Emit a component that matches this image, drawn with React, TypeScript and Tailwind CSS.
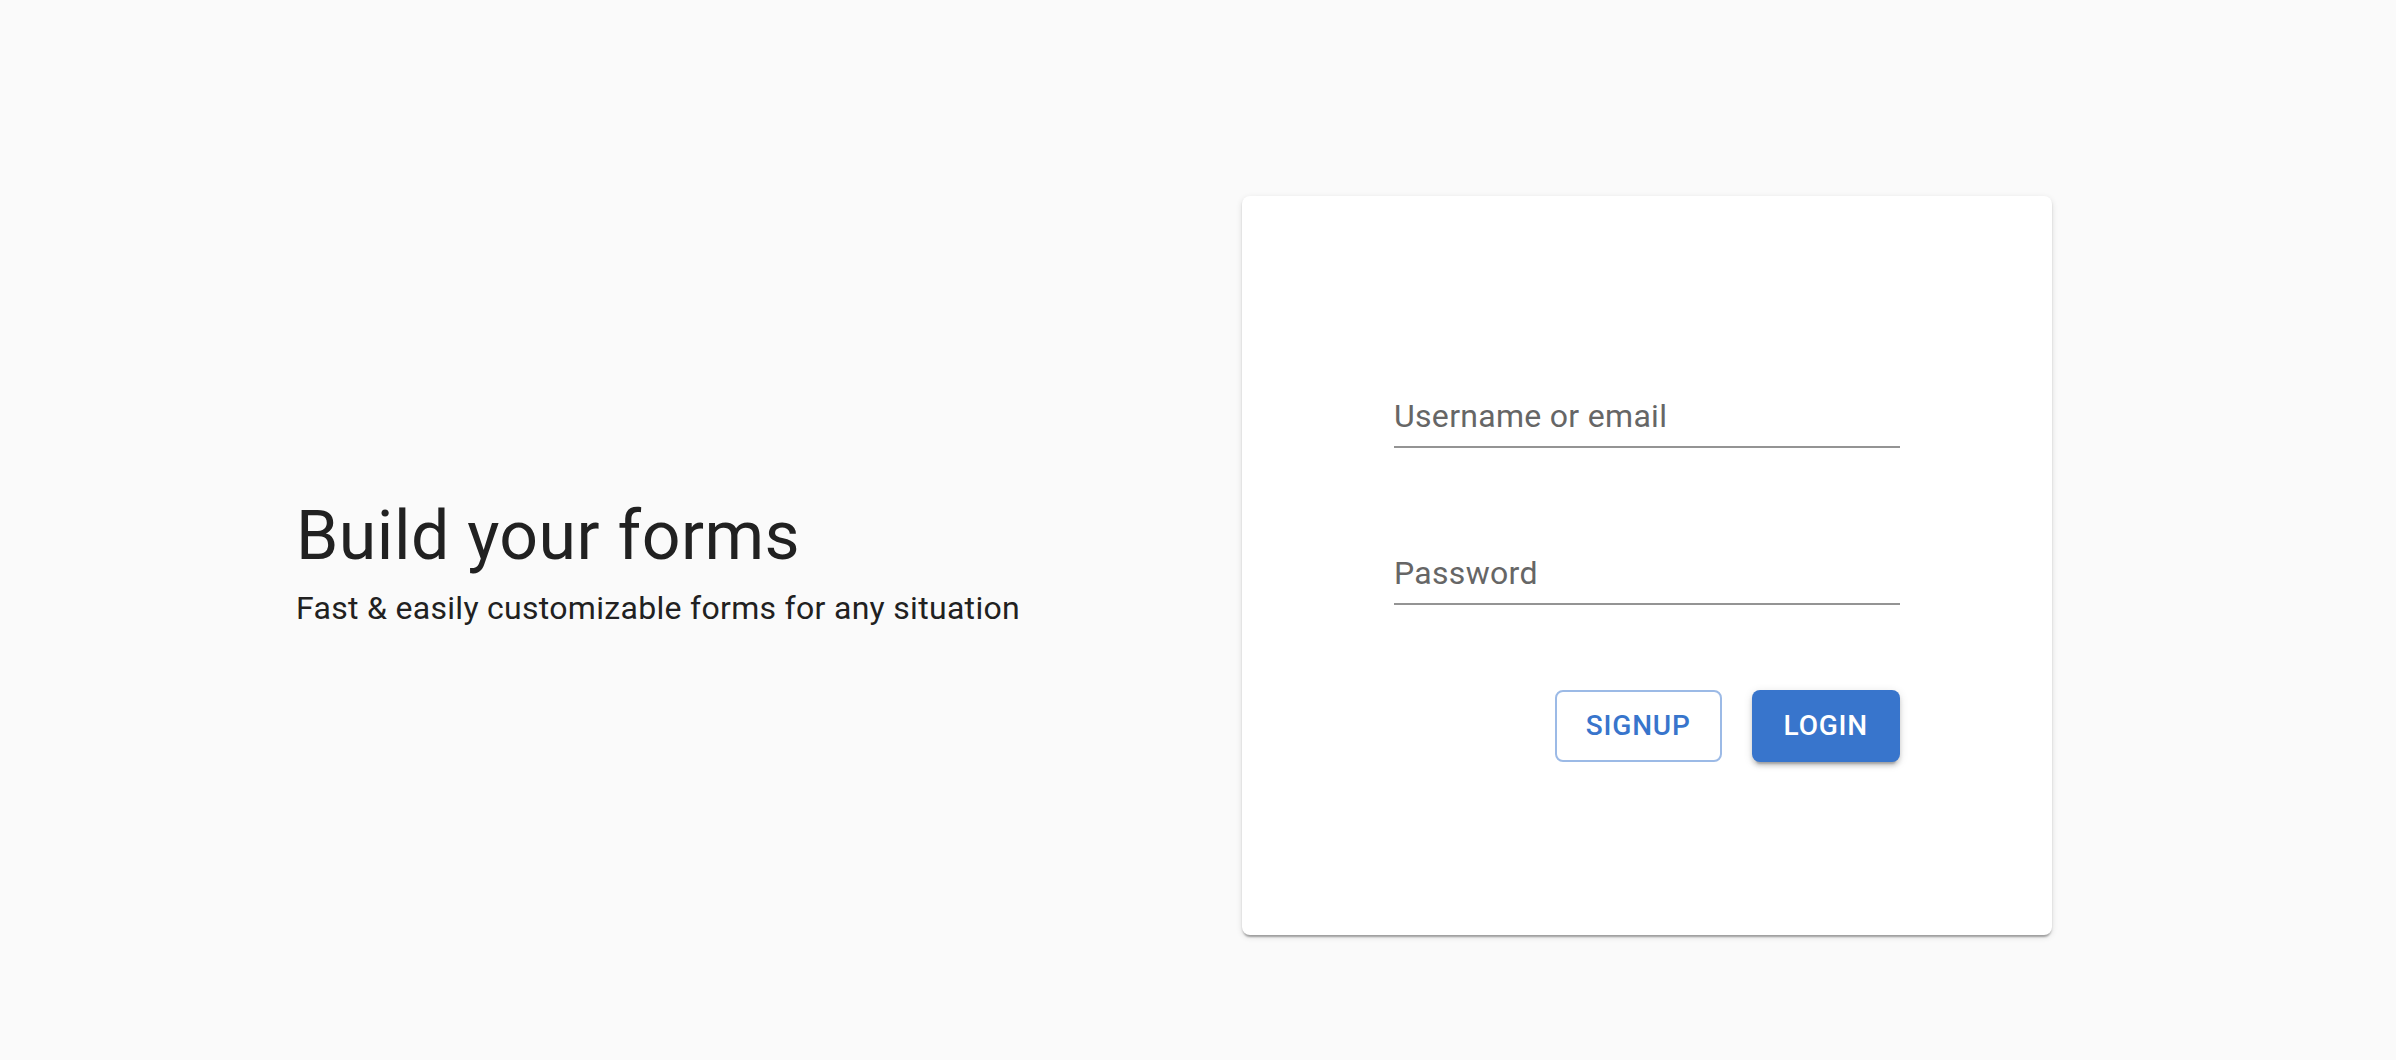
import React from 'react';

const font = { fontFamily: 'Roboto, "Noto Sans", Arial, sans-serif' };

function Field({ label, type = 'text' }: { label: string; type?: string }) {
  return (
    <div className="flex flex-col border-b-2 border-[#949494] pb-[11px]">
      <input
        type={type}
        placeholder={label}
        className="h-[38px] w-full bg-transparent text-[32px] leading-[38px] tracking-[0.3px] text-[#212121] outline-none placeholder:text-[#666666]"
      />
    </div>
  );
}

export default function App() {
  return (
    <div
      className="flex h-[1060px] w-full items-center bg-[#fafafa] pl-[296px] pt-[71px]"
      style={font}
    >
      {/* Texto */}
      <div className="flex w-[946px] flex-col">
        <h1 className="pb-[12px] text-[68px] font-normal leading-[72px] tracking-[0.5px] text-[#212121]">
          Build your forms
        </h1>
        <p className="text-[32px] leading-[48px] tracking-[0.3px] text-[#212121]">
          Fast &amp; easily customizable forms for any situation
        </p>
      </div>

      {/* Card */}
      <div className="flex h-[739px] w-[810px] flex-col rounded-[8px] bg-white px-[152px] pt-[201px] shadow-[0_4px_2px_-2px_rgba(0,0,0,0.2),0_2px_2px_0_rgba(0,0,0,0.14),0_2px_6px_0_rgba(0,0,0,0.12)]">
        <Field label="Username or email" />
        <div className="mt-[106px]">
          <Field label="Password" type="password" />
        </div>

        <div className="mt-[85px] flex justify-end gap-[30px]">
          <button className="h-[72px] rounded-[8px] border-2 border-[#9cbae6] px-[29px] text-[28px] font-medium uppercase tracking-[0.8px] text-[#3875cc]">
            Signup
          </button>
          <button className="h-[72px] rounded-[8px] bg-[#3875cc] px-[32px] text-[28px] font-medium uppercase tracking-[0.8px] text-white shadow-[0_6px_2px_-4px_rgba(0,0,0,0.2),0_4px_4px_0_rgba(0,0,0,0.14),0_2px_10px_0_rgba(0,0,0,0.12)]">
            Login
          </button>
        </div>
      </div>
    </div>
  );
}
